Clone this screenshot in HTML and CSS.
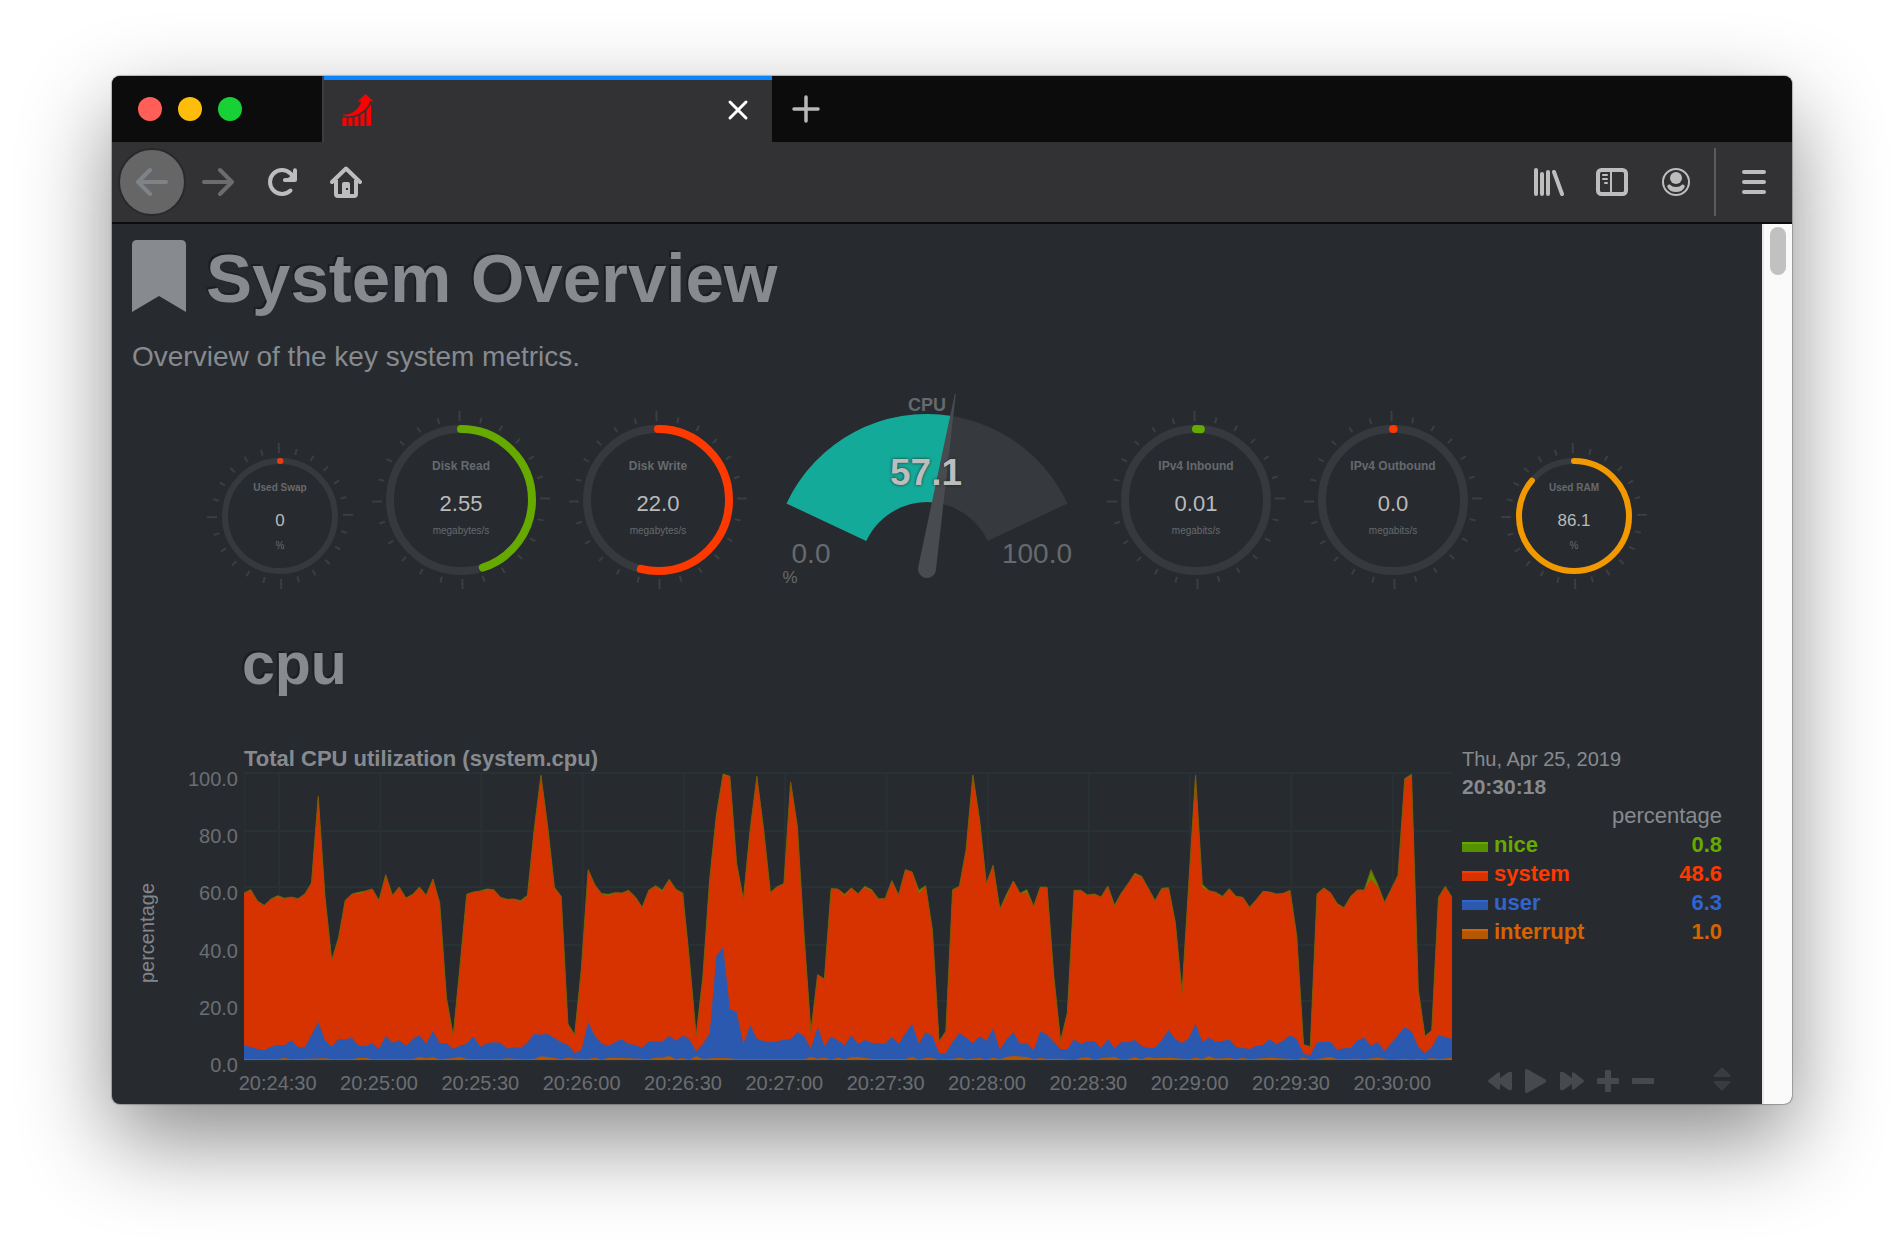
FILE: index.html
```html
<!DOCTYPE html>
<html lang="en">
<head>
<meta charset="utf-8">
<title>System Overview</title>
<link rel="stylesheet" href="styles.css">
</head>
<body>
<div class="window">
  <header class="tabs">
    <div class="lights"><span class="light light-close"></span><span class="light light-min"></span><span class="light light-max"></span></div>
    <div class="tab">
      <svg class="icon" width="32" height="32" viewBox="0 0 32 32" aria-hidden="true">
        <path fill="#f00" d="M23.500 0L31.500 7.500 28 7C26 15 16 22.600 6 22.200 3 22 1 21.500.5 20.800 9 21.500 18 15 19 7.200L15.500 7.500z"/>
        <path fill="#f00" d="M.5 23.500h4.200V32H.5zM6.500 23.700h4V32h-4zM12.500 23l4-1.200V32h-4zM18.500 20.800l4-2.600V32h-4zM24.500 16.500L29 10v22h-4.500z"/>
      </svg>
      <button class="icon-button" aria-label="Close tab">
        <svg width="22" height="22" viewBox="0 0 22 22"><path d="M3 3l16 16M19 3L3 19" stroke="#fff" stroke-width="3" stroke-linecap="round"/></svg>
      </button>
    </div>
    <button class="icon-button new-tab" aria-label="New tab">
      <svg width="28" height="28" viewBox="0 0 28 28"><path d="M14 2v24M2 14h24" stroke="#b8b8b9" stroke-width="3.500" stroke-linecap="round"/></svg>
    </button>
  </header>

  <nav class="toolbar">
    <button class="icon-button back" aria-label="Back">
      <svg width="32" height="32" viewBox="0 0 32 32"><path d="M2 16h28M14 4L2 16l12 12" fill="none" stroke="#7d8388" stroke-width="4" stroke-linecap="round" stroke-linejoin="round"/></svg>
    </button>
    <button class="icon-button forward" aria-label="Forward">
      <svg width="32" height="32" viewBox="0 0 32 32"><path d="M2 16h28M18 4l12 12-12 12" fill="none" stroke="#6c6c6e" stroke-width="4" stroke-linecap="round" stroke-linejoin="round"/></svg>
    </button>
    <button class="icon-button" aria-label="Reload">
      <svg width="32" height="32" viewBox="0 0 32 32"><path d="M24.500 24.500A12 12 0 1 1 24.500 7.500L27 10" fill="none" stroke="#bdbdbe" stroke-width="4" stroke-linecap="round"/><path d="M29 2.200Q31 2.200 31 4.200V14q0 2-2 2H19q-2.500 0-2-2.400.3-1.400 2-1.600h3L27 8V4.200q0-2 2-2z" fill="#bdbdbe"/></svg>
    </button>
    <button class="icon-button" aria-label="Home">
      <svg width="32" height="32" viewBox="0 0 32 32"><path d="M2 16L16 2.500 30 16" fill="none" stroke="#bdbdbe" stroke-width="4" stroke-linecap="round" stroke-linejoin="round"/><path d="M6 14v14q0 2 2 2h16q2 0 2-2V14" fill="none" stroke="#bdbdbe" stroke-width="4"/><path fill="#bdbdbe" fill-rule="evenodd" d="M12 30V18q0-2 2-2h4q2 0 2 2v12zM16 22v2h2v-2z"/></svg>
    </button>
    <div class="toolbar-end">
      <button class="icon-button" aria-label="Library">
        <svg width="32" height="32" viewBox="0 0 32 32"><path d="M4 4v24M10 8v20M16 6v22M22 6l8 22" stroke="#bdbdbe" stroke-width="4" stroke-linecap="round"/></svg>
      </button>
      <button class="icon-button" aria-label="Sidebars">
        <svg width="32" height="32" viewBox="0 0 32 32"><rect x="2" y="4" width="28" height="24" rx="3.500" fill="none" stroke="#bdbdbe" stroke-width="4"/><path d="M15 4v24M7 9h4M7 13h4M9 17h2" stroke="#bdbdbe" stroke-width="2" stroke-linecap="round"/></svg>
      </button>
      <button class="icon-button" aria-label="Account">
        <svg width="32" height="32" viewBox="0 0 32 32"><circle cx="16" cy="16" r="13" fill="none" stroke="#bdbdbe" stroke-width="2"/><circle cx="16" cy="12" r="6" fill="#bdbdbe"/><path d="M9.800 18.400q2.200 2.600 6.200 2.600t6.200-2.600c2-.2 3.200 1.200 2.200 3.100Q22 26 16 26t-8.400-4.500c-1-1.900.2-3.300 2.200-3.100z" fill="#bdbdbe"/></svg>
      </button>
      <span class="divider"></span>
      <button class="icon-button" aria-label="Menu">
        <svg width="32" height="32" viewBox="0 0 32 32"><path d="M6 6h20M6 16h20M6 26h20" stroke="#bdbdbe" stroke-width="4" stroke-linecap="round"/></svg>
      </button>
    </div>
  </nav>

  <div class="viewport">
    <main class="page">
      <h1 class="title">
        <svg width="54" height="72" viewBox="0 0 54 72" aria-hidden="true"><path fill="#878a8e" d="M5 0h44q5 0 5 5v67L27 56 0 72V5q0-5 5-5z"/></svg>
        <span>System Overview</span>
      </h1>
      <p class="lead">Overview of the key system metrics.</p>

      <div class="gauges" id="gauges">
        <svg class="dial" width="324" height="200" viewBox="0 0 324 200" role="img" aria-label="CPU 57.1%">
          <path fill="#36393d" d="M21.500 113.500A155 155 0 0 1 302.500 113.500L222.700 151A67 67 0 0 0 101.300 151z"/>
          <path fill="#14aa9a" d="M21.500 113.500A155 155 0 0 1 186.800 26L172.700 112.900A67 67 0 0 0 101.300 151z"/>
          <text class="dial-title" x="162" y="21">CPU</text>
          <path fill="#484b4f" d="M189.800 4h1L170.900 180.400A9 9 0 1 1 153.100 177.600z"/>
          <text class="dial-value" x="161" y="95">57.1</text>
          <text class="dial-limit" x="46" y="173">0.0</text>
          <text class="dial-limit" x="272" y="173">100.0</text>
          <text class="dial-unit" x="25" y="193">%</text>
        </svg>
      </div>

      <h2 class="section-title">cpu</h2>

      <section class="chart">
        <div class="axis">
          <span class="axis-name">percentage</span>
          <div class="axis-values"><span>100.0</span><span>80.0</span><span>60.0</span><span>40.0</span><span>20.0</span><span>0.0</span></div>
        </div>
        <div class="plot-column">
          <h3 class="chart-title">Total CPU utilization (system.cpu)</h3>
          <svg class="plot" id="plot" viewBox="0 126 179 870" preserveAspectRatio="none" role="img" aria-label="CPU utilization over time"></svg>
          <div class="times"><span>20:24:30</span><span>20:25:00</span><span>20:25:30</span><span>20:26:00</span><span>20:26:30</span><span>20:27:00</span><span>20:27:30</span><span>20:28:00</span><span>20:28:30</span><span>20:29:00</span><span>20:29:30</span><span>20:30:00</span></div>
        </div>
        <aside class="legend">
          <div class="date">Thu, Apr 25, 2019</div>
          <div class="clock">20:30:18</div>
          <table class="series">
            <thead><tr><th colspan="3" scope="col">percentage</th></tr></thead>
            <tbody>
              <tr class="nice"><td class="key"><span class="swatch"></span></td><td>nice</td><td class="value">0.8</td></tr>
              <tr class="system"><td class="key"><span class="swatch"></span></td><td>system</td><td class="value">48.6</td></tr>
              <tr class="user"><td class="key"><span class="swatch"></span></td><td>user</td><td class="value">6.3</td></tr>
              <tr class="interrupt"><td class="key"><span class="swatch"></span></td><td>interrupt</td><td class="value">1.0</td></tr>
            </tbody>
          </table>
          <div class="controls">
            <button class="icon-button" aria-label="Rewind"><svg width="24" height="28" viewBox="0 0 24 28"><path fill="#46494d" d="M.5 13q-1 1 0 2l9.500 7.500q2 1 2-1V17l8.500 6q3.500 1 3.500-1V6q0-2-3.500-1L12 11V6.500q0-2-2-1z"/></svg></button>
            <button class="icon-button" aria-label="Play"><svg width="22" height="28" viewBox="0 0 22 28"><path fill="#46494d" d="M3 2.500l17.500 10q1.500 1.500 0 3L3 25.500q-3 1.500-3-1.500V4q0-3 3-1.500z"/></svg></button>
            <button class="icon-button" aria-label="Forward"><svg width="24" height="28" viewBox="0 0 24 28"><path fill="#46494d" d="M23.500 13q1 1 0 2L14 22.500q-2 1-2-1V17l-8.500 6Q0 24 0 22V6q0-2 3.500-1L12 11V6.500q0-2 2-1z"/></svg></button>
            <button class="icon-button" aria-label="Zoom in"><svg width="22" height="28" viewBox="0 0 22 28"><path fill="#46494d" d="M9 3h4q1 0 1 1v7h7q1 0 1 1v4q0 1-1 1h-7v7q0 1-1 1H9q-1 0-1-1v-7H1q-1 0-1-1v-4q0-1 1-1h7V4q0-1 1-1z"/></svg></button>
            <button class="icon-button" aria-label="Zoom out"><svg width="22" height="28" viewBox="0 0 22 28"><rect y="11" width="22" height="6" rx="1" fill="#46494d"/></svg></button>
            <button class="icon-button resize" aria-label="Resize"><svg width="18" height="28" viewBox="0 0 18 28"><path fill="#393c40" d="M9 0l8 8q1 2-1 2H2q-2 0-1-2zM9 24l8-8q1-2-1-2H2q-2 0-1 2z"/></svg></button>
          </div>
        </aside>
      </section>
    </main>
    <div class="scrollbar" aria-hidden="true"><span class="thumb"></span></div>
  </div>
</div>
<script src="charts.js"></script>
</body>
</html>
```
FILE: styles.css
```css
* { box-sizing: border-box; }

body {
  margin: 0;
  padding: 76px 112px 0;
  min-height: 100vh;
  background: #fff;
  color: #878a8e;
  font-family: "Liberation Sans", Arial, sans-serif;
}

h1, h2, h3, p { margin: 0; }

svg { display: block; }

.window {
  overflow: hidden;
  border-radius: 8px;
  background: #272b30;
  box-shadow: 0 0 1px 1px rgba(0, 0, 0, .25), 0 36px 90px rgba(0, 0, 0, .46);
}

.icon-button {
  display: flex;
  align-items: center;
  justify-content: center;
  padding: 0;
  border: 0;
  background: none;
}

/* Tab strip */
.tabs { display: flex; height: 66px; background: #0c0c0c; }
.lights { display: flex; align-items: center; gap: 16px; width: 212px; padding-left: 26px; border-right: 2px solid #3c3c3e; }
.light { width: 24px; height: 24px; border-radius: 50%; }
.light-close { background: #ff5f56; }
.light-min { background: #ffbd0b; }
.light-max { background: #18d136; }
.tab {
  display: flex;
  align-items: center;
  justify-content: space-between;
  width: 448px;
  padding: 0 23px 2px 18px;
  border-top: 4px solid #0a84ff;
  background: #323234;
}
.new-tab { padding: 0 20px; }

/* Navigation toolbar */
.toolbar {
  display: flex;
  align-items: center;
  gap: 32px;
  height: 82px;
  padding: 0 22px 0 6px;
  border-bottom: 2px solid #0c0c0d;
  background: #323234;
}
.back { width: 68px; height: 68px; border: 2px solid #29292b; border-radius: 50%; background: #666; }
.forward { margin-left: -16px; }
.toolbar-end { display: flex; align-items: center; gap: 32px; margin-left: auto; }
.divider { width: 2px; height: 68px; margin: 0 -10px; background: #5b5b5e; }

/* Page */
.viewport { display: flex; }
.page { flex: 1; min-width: 0; padding: 16px 40px 9px 20px; }
.scrollbar { width: 30px; padding: 3px 0 0 6px; border-left: 2px solid #e8e8e8; background: #fafafa; }
.thumb { display: block; width: 16px; height: 48px; border-radius: 8px; background: #c1c1c1; }

.title {
  display: flex;
  gap: 20px;
  font-size: 69px;
  line-height: 78px;
  text-shadow: -2px -2px 0 #1c1f22;
}
.lead { margin-top: 23px; font-size: 28px; line-height: 32px; }

/* Gauges */
.gauges { display: flex; align-items: flex-end; justify-content: center; gap: 17px; margin-top: 17px; }
.gauges text { text-anchor: middle; fill: #66696d; }
.track { fill: none; stroke: #36393d; }
.ticks { fill: none; stroke: #3b3e42; }
.ring { fill: none; stroke-linecap: round; }
.gauge-title { font-size: 12px; font-weight: bold; }
.gauges .gauge-value { font-size: 22px; fill: #b9babb; }
.gauge-unit { font-size: 10px; }
.small .gauge-title { font-size: 10px; }
.gauges .small .gauge-value { font-size: 17px; }
.dial-title { font-size: 18px; font-weight: bold; }
.gauges .dial-value { font-size: 37px; font-weight: bold; fill: #bdbdbd; text-shadow: 0 0 3px #222; }
.dial-limit { font-size: 28px; }
.dial-unit { font-size: 17px; }

.section-title {
  margin: 41px 0 48px 110px;
  font-size: 59px;
  line-height: 66px;
  text-shadow: -2px -2px 0 #1c1f22;
}

/* Chart */
.chart { display: flex; }
.axis { display: flex; justify-content: space-between; width: 112px; padding: 22px 6px 18px 3px; color: #6b6e72; }
.axis-name {
  align-self: center;
  padding-bottom: 22px;
  writing-mode: vertical-rl;
  transform: rotate(180deg);
  font-size: 20px;
  line-height: 24px;
  color: #828589;
}
.axis-values {
  display: flex;
  flex-direction: column;
  justify-content: space-between;
  text-align: right;
  font-size: 20px;
  line-height: 24px;
}
.plot-column { flex: 1; min-width: 0; }
.chart-title { font-size: 22px; line-height: 28px; white-space: nowrap; }
.plot { width: 100%; height: 290px; margin-top: -1px; }
.grid { stroke: #283234; stroke-width: 2px; }
.grid line { vector-effect: non-scaling-stroke; }
.edge { fill: none; stroke: #7d5a08; stroke-width: 1px; vector-effect: non-scaling-stroke; }
.times {
  display: grid;
  grid-template-columns: repeat(12, 1fr);
  margin: 9px 9px 0 -17px;
  text-align: center;
  font-size: 20px;
  line-height: 24px;
  color: #6b6e72;
}

/* Legend */
.legend { display: flex; flex-direction: column; width: 260px; margin-left: 10px; line-height: 28px; }
.date { font-size: 20px; }
.clock { font-size: 21px; font-weight: bold; }
.series { width: 100%; border-collapse: collapse; font-size: 22px; font-weight: bold; line-height: 29px; }
.series th { padding: 0; text-align: right; font-weight: normal; }
.series td { padding: 0; }
.series .key { width: 32px; }
.series .value { text-align: right; }
.swatch { display: inline-block; width: 26px; height: 10px; border-top: 2px solid; }
.nice { color: #66aa00; }
.nice .swatch { background: #568f00; }
.system { color: #fe3900; }
.system .swatch { background: #d63301; }
.user { color: #3064d0; }
.user .swatch { background: #2c59b0; }
.interrupt { color: #d66300; }
.interrupt .swatch { background: #b45700; }
.controls { display: flex; gap: 13px; margin-top: auto; padding-left: 26px; }
.resize { margin: 0 -9px 0 auto; }
```
FILE: charts.js
```js
// Ring gauges: title, value, unit, colour and sweep in degrees.
const rings = [
  { title: 'Used Swap', value: '0', unit: '%', color: '#e64011', sweep: 0.5, small: true },
  { title: 'Disk Read', value: '2.55', unit: 'megabytes/s', color: '#66aa00', sweep: 162 },
  { title: 'Disk Write', value: '22.0', unit: 'megabytes/s', color: '#fe3900', sweep: 194 },
  { title: 'IPv4 Inbound', value: '0.01', unit: 'megabits/s', color: '#66aa00', sweep: 4, after: true },
  { title: 'IPv4 Outbound', value: '0.0', unit: 'megabits/s', color: '#fe3900', sweep: 0.5, after: true },
  { title: 'Used RAM', value: '86.1', unit: '%', color: '#f29900', sweep: 310, small: true, after: true }
];

const gauges = document.getElementById('gauges');
const dial = gauges.querySelector('.dial');

for (const g of rings) {
  const size = g.small ? 148 : 180;
  const c = size / 2;
  const r = g.small ? 55 : 71;
  const width = g.small ? 6 : 8;
  const y = g.small ? [49, 84, 107] : [60, 101, 124];
  let ticks = '';
  for (let i = 0; i < 24; i++) {
    const inner = i % 6 ? c - 11 : c - 11;
    const outer = i % 6 ? c - 5 : c - 1;
    ticks += `<path d="M${c} ${c - inner}V${c - outer}" transform="rotate(${i * 15 - 1} ${c} ${c})"/>`;
  }
  const svg = `
    <svg class="${g.small ? 'ring-gauge small' : 'ring-gauge'}" width="${size}" height="${size}" viewBox="0 0 ${size} ${size}" role="img" aria-label="${g.title}">
      <g class="ticks" stroke-width="2">${ticks}</g>
      <circle class="track" cx="${c}" cy="${c}" r="${r}" stroke-width="${width}"/>
      <circle class="ring" cx="${c}" cy="${c}" r="${r}" stroke="${g.color}" stroke-width="${width}" pathLength="360" stroke-dasharray="${g.sweep} 360" transform="rotate(-90 ${c} ${c})"/>
      <text class="gauge-title" x="${c}" y="${y[0]}">${g.title}</text>
      <text class="gauge-value" x="${c}" y="${y[1]}">${g.value}</text>
      <text class="gauge-unit" x="${c}" y="${y[2]}">${g.unit}</text>
    </svg>`;
  if (g.after) gauges.insertAdjacentHTML('beforeend', svg);
  else dial.insertAdjacentHTML('beforebegin', svg);
}

// Stacked area: one sample every two seconds, heights measured down to the base line.
const base = 990;
const system = [
  490,482,514,527,508,502,506,502,507,493,460,200,500,692,625,512,493,492,484,478,
  512,435,497,472,505,494,472,497,448,520,805,918,710,494,487,484,481,480,503,509,
  508,516,497,300,137,290,473,500,883,915,715,420,466,492,498,489,490,482,502,533,
  481,468,486,449,479,490,690,918,740,450,255,136,140,402,508,300,140,300,488,471,
  462,157,290,620,905,735,748,477,478,498,475,492,473,483,507,507,453,496,420,427,
  490,468,600,935,905,480,470,360,136,270,462,407,538,500,454,491,487,530,472,473,
  740,933,850,482,482,496,493,502,469,531,490,462,434,440,476,513,476,474,578,788,
  460,137,472,483,488,502,477,500,503,533,510,485,487,493,491,482,620,945,951,493,
  475,489,524,534,500,481,481,447,470,518,478,437,147,138,780,920,902,503,470,503];
const user = [
  946,951,957,961,950,945,946,931,951,952,915,876,930,950,927,928,923,948,948,940,
  957,917,938,931,947,927,916,941,903,940,939,957,947,941,919,950,940,937,938,956,
  952,954,937,912,914,912,924,937,945,969,960,876,918,941,947,936,928,942,945,953,
  935,934,936,917,932,917,927,964,942,910,677,652,836,847,942,885,927,933,937,934,
  929,927,906,918,956,890,948,920,931,946,916,943,930,938,940,941,921,943,910,882,
  941,907,918,969,969,936,909,923,940,919,932,895,960,928,906,942,938,961,904,914,
  936,957,958,928,942,934,934,954,927,955,936,937,930,948,954,953,930,900,928,939,
  925,881,935,923,935,933,928,951,954,957,947,945,928,943,932,916,927,971,976,937,
  936,936,959,955,954,931,923,947,936,963,940,915,892,904,950,970,952,915,921,927];
// The interrupt series is almost flat, so only its bends are listed.
const interrupt = [
  [0,987],[5,988],[6,984],[7,988],[10,986],[12,985],[13,988],[16,988],[17,984],[18,984],[19,988],[25,988],
  [26,981],[27,985],[28,982],[29,988],[31,985],[32,981],[33,987],[38,988],[39,985],[41,988],[43,987],[44,979],
  [46,984],[47,988],[48,983],[49,986],[51,987],[52,983],[53,989],[54,983],[57,985],[60,988],[61,983],[62,983],
  [63,978],[64,988],[65,984],[66,989],[67,979],[68,987],[70,984],[72,985],[73,988],[83,988],[84,981],[85,986],
  [86,983],[87,989],[88,983],[89,988],[90,982],[91,981],[93,987],[98,987],[99,981],[100,989],[101,984],[102,984],
  [103,989],[105,987],[106,983],[107,988],[109,984],[110,989],[111,983],[112,988],[113,981],[114,978],[116,981],
  [117,988],[118,984],[119,987],[121,986],[123,990],[124,984],[125,982],[126,989],[127,985],[129,981],[130,989],
  [131,988],[132,982],[133,988],[134,981],[135,985],[137,983],[140,988],[141,983],[142,987],[143,979],[144,986],
  [146,984],[147,988],[148,984],[149,988],[150,986],[152,983],[155,987],[156,989],[157,983],[158,989],[159,988],
  [160,984],[161,981],[162,988],[165,986],[166,988],[168,983],[170,989],[172,986],[173,989],[174,986],[175,989],
  [176,984],[177,988],[179,983]];
const niceExtra = { 1: 2, 5: 4, 17: 4, 36: 3, 41: 3, 54: 4, 62: 4, 71: 3, 89: 4, 92: 3, 93: 3, 100: 8, 113: 6, 116: 7,
  129: 4, 132: 3, 142: 8, 145: 2, 162: 2, 167: 27, 168: 5, 173: 4 };

const pairs = values => values.map((v, i) => [i, v]);
const points = list => list.map(p => p.join(',')).join(' ');
const area = (list, color) => `<polygon fill="${color}" points="0,${base} ${points(list)} 179,${base}"/>`;
const nice = system.map((v, i) => v - 1 - (niceExtra[i] || 0));

let lines = '<line x1="0" y1="126" x2="0" y2="993"/>';
for (const y of [129, 303, 471, 645, 813, 992]) lines += `<line x1="0" y1="${y}" x2="179" y2="${y}"/>`;
for (let x = 5.2; x < 179; x += 15) lines += `<line x1="${x}" y1="129" x2="${x}" y2="992"/>`;

document.getElementById('plot').innerHTML =
  `<g class="grid">${lines}</g>` +
  area(pairs(nice), '#568f00') +
  area(pairs(system), '#d63301') +
  `<polyline class="edge" points="${points(pairs(nice))}"/>` +
  area(pairs(user), '#2c59b0') +
  area(interrupt, '#b45700');
```
